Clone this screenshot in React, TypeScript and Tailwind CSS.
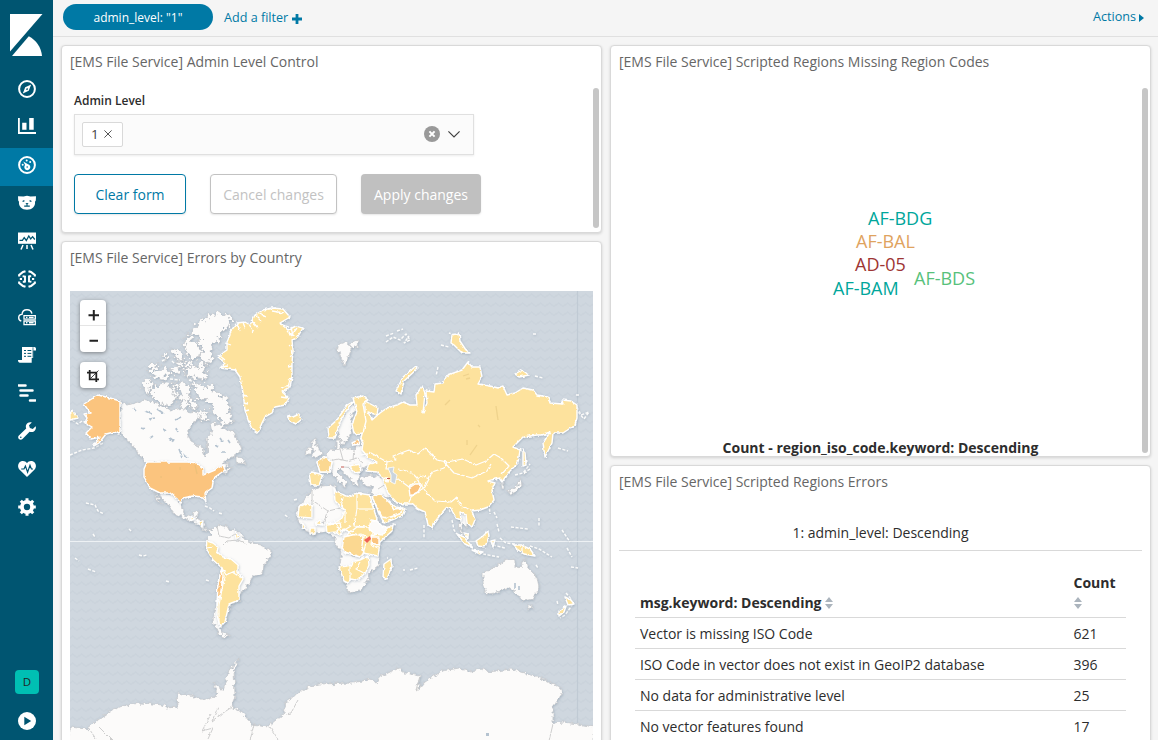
import React from "react";

const FONT = "font-['Open_Sans','Noto_Sans',sans-serif]";

function Icon({ children }: { children: React.ReactNode }) {
  return (
    <svg width="18" height="18" viewBox="0 0 18 18" fill="none" stroke="#fff" strokeWidth="1.6">
      {children}
    </svg>
  );
}

const navIcons: React.ReactNode[] = [
  <Icon>
    <circle cx="9" cy="9" r="7.9" strokeWidth="2" />
    <path d="M13.2 4.6 10.7 10.7 4.8 13.4 7.2 7.2Z M9.1 8 8 9.3 9.1 10.2 10.1 9Z" fill="#fff" fillRule="evenodd" stroke="none" />
  </Icon>,
  <Icon>
    <path d="M.9 0V15H18" strokeWidth="1.8" />
    <path d="M4.2 4.7h4.3V11.8h-4.3ZM11.2 0h4.5V11.8H11.2Z" fill="#fff" stroke="none" />
  </Icon>,
  <Icon>
    <circle cx="9" cy="9" r="7.9" strokeWidth="2" />
    <path d="M7.1 9.1 5.2 5.4 10 8.2A3 3 0 1 1 7.1 9.1Z" fill="#fff" stroke="none" />
    <circle cx="4.7" cy="8.7" r="1" fill="#fff" stroke="none" />
    <circle cx="8.7" cy="4.6" r="1" fill="#fff" stroke="none" />
    <circle cx="12.2" cy="6" r="1" fill="#fff" stroke="none" />
    <circle cx="9.2" cy="11" r=".8" fill="#0079a5" stroke="none" />
  </Icon>,
  <Icon>
    <path d="M0 2.2 5.5 2.6 9 1.8 12.5 2.6 18 2.2 17.8 6.5 17 7.8C17.6 12.4 14 15.8 9 15.8S.4 12.4 1 7.8L.2 6.5Z" fill="#fff" stroke="none" />
    <path d="M4.6 7.5 6.4 6.6M13.4 7.5 11.6 6.6M6.2 12.2h5.6" stroke="#005571" strokeWidth="1.3" />
    <path d="M7.3 8.9h3.4L9 10.6Z" fill="#005571" stroke="none" />
    <path d="M9 10V12" stroke="#005571" strokeWidth="1" />
  </Icon>,
  <Icon>
    <path d="M0 .5H18V11.8H0Z" fill="#fff" stroke="none" />
    <path d="M1.5 8.3 4.4 8.3 6.2 5.7 8.3 8.5 10.8 4 12.7 7 14.6 4.7 16.8 7.5" stroke="#005571" strokeWidth="1.3" />
    <path d="M5 13 3 17.5M9 13V17M13 13 15 17.5" strokeWidth="1.5" />
  </Icon>,
  <Icon>
    <path d="M7.5 1.2 5 2 1.2 5V6.5M1.2 11.5V13L5 16 7.5 16.8M10.5 1.2 13 2 16.8 5V6.5M16.8 11.5V13L13 16 10.5 16.8" strokeWidth="2.2" />
    <path d="M1.8 9H4M16.2 9H14M7 12.4V6.6L4.6 6.2M11 5.6V11.4L13.4 11.8M4.8 11.8H7M13.2 6.2H11" strokeWidth="1.9" />
  </Icon>,
  <Icon>
    <path d="M3.3 13C1.6 12.5.7 11.3.7 9.7.7 7.8 2.2 6.4 4 6.4 4.2 3.6 6.2 1.7 9 1.7c2.6 0 4.5 1.6 4.9 4" strokeWidth="1.4" />
    <path d="M6 7.6h11.3v3.6H6ZM6 13h11.3v3.6H6Z" strokeWidth="1.3" />
    <path d="M8 9.4h1.4M11 9.4h4.6M8 14.8h1.4M11 14.8h4.6" strokeWidth="1.5" />
  </Icon>,
  <Icon>
    <path d="M4 1H16.4Q18 1 18 2.6V4.4H15.2V12H13.7V16.8H2Q0 16.8 0 14H4Z" fill="#fff" stroke="none" />
    <path d="M6 4.5h2M9.5 4.5h3.8M6 7.4h2M9.5 7.4h3.8M6 10.3h2M9.5 10.3h3.8" stroke="#005571" strokeWidth="1" />
    <path d="M15 1.2V11.8" stroke="#005571" strokeWidth=".7" />
  </Icon>,
  <Icon>
    <path d="M.6 1.4H7.5M2.5 6.4H14.5M2.5 11.4H9.5M12 16.4H17.3" strokeWidth="2.5" strokeLinecap="round" />
  </Icon>,
  <Icon>
    <path d="M17.6 4.2 14.8 7 11.9 6.1 11 3.2 13.8.4C11.4-.4 8.8.8 8 3.2 7.7 4.4 7.8 5.5 8.2 6.5L.9 13.5C-.1 14.5-.1 16.1.9 17.1S3.5 18.1 4.5 17.1L11.6 9.8C14 10.7 16.7 9.6 17.6 7.2 18 6.2 18 5.1 17.6 4.2Z" fill="#fff" stroke="none" />
    <circle cx="2.8" cy="15.3" r=".8" fill="#005571" stroke="none" />
  </Icon>,
  <Icon>
    <path d="M9 3.2C7.2.4 3 .5 1 3-.7 5.5.1 8.1 1.9 10L9 17 16.1 10C17.9 8.1 18.7 5.5 17 3 15 .5 10.8.4 9 3.2Z" fill="#fff" stroke="none" />
    <path d="M3.2 9H6L7.4 6 9.6 12.2 12 5.3 13.4 9H15" stroke="#005571" strokeWidth="1.2" />
  </Icon>,
  <Icon>
    <circle cx="9" cy="9" r="5.1" strokeWidth="3.8" />
    <path d="M9 .2V4M9 14V17.8M.2 9H4M14 9H17.8M2.8 2.8 5.4 5.4M12.6 12.6 15.2 15.2M15.2 2.8 12.6 5.4M5.4 12.6 2.8 15.2" strokeWidth="3" />
  </Icon>,
];

function Sidebar() {
  return (
    <nav className="flex h-full w-[53px] shrink-0 flex-col bg-[#005571]">
      <div className="flex h-[72px] shrink-0 items-start pt-[14px] pl-[10px]">
        <svg width="33" height="42" viewBox="0 0 33 42" fill="#fff">
          <path d="M0 0H32.5L0 37.5Z" />
          <path d="M18.8 22.2C26 26 31.2 33 32 42H2Z" />
        </svg>
      </div>
      {navIcons.map((icon, i) => (
        <div
          key={i}
          className={
            i === 2
              ? "flex h-[38px] shrink-0 items-center bg-[#0079a5] pb-[4px] pl-[18px]"
              : "flex h-[38px] shrink-0 items-center pb-[4px] pl-[18px]"
          }
        >
          {icon}
        </div>
      ))}
      <div className="mt-auto flex flex-col pb-[10px] pl-[15px]">
        <div className="flex h-6 w-6 items-center justify-center rounded bg-[#00bfb3] text-[11.5px] text-[#222]">D</div>
        <svg className="mt-[18px] ml-[3px]" width="18" height="18" viewBox="0 0 18 18">
          <circle cx="9" cy="9" r="9" fill="#fff" />
          <path d="M6.3 4.7 13.2 9 6.3 13.3Z" fill="#005571" />
        </svg>
      </div>
    </nav>
  );
}

function Panel({ title, className, children }: { title: string; className: string; children: React.ReactNode }) {
  return (
    <section
      className={
        "relative flex flex-col overflow-hidden rounded-[4px] border border-[#d9d9d9] bg-white shadow-[0_1px_3px_rgba(0,0,0,0.15)] " +
        className
      }
    >
      <h2 className="h-[32px] shrink-0 pl-2 text-[14px] leading-[31px] text-[#666]">{title}</h2>
      {children}
    </section>
  );
}

function AdminControl() {
  return (
    <Panel title="[EMS File Service] Admin Level Control" className="h-[188px]">
      <div className="pt-[15px] pl-3">
        <div className="text-[12px] leading-[16px] font-semibold text-[#2d2d2d]">Admin Level</div>
        <div className="mt-[5px] flex h-[41px] w-[400px] items-center border border-[#e0e0e0] bg-[#fbfbfb] pb-px pl-[7px] shadow-[0_1px_2px_rgba(0,0,0,0.08)]">
          <div className="flex h-[25px] w-[41px] items-center gap-[5px] rounded-[2px] border border-[#d9d9d9] bg-white pl-2 text-[13.5px] text-[#3f3f3f]">
            <span>1</span>
            <svg width="8" height="8" viewBox="0 0 8 8" stroke="#555" fill="none"><path d="M.4.4 7.6 7.6M7.6.4.4 7.6" /></svg>
          </div>
          <svg className="ml-[301px]" width="16" height="16" viewBox="0 0 16 16">
            <circle cx="8" cy="8" r="8" fill="#999" />
            <path d="M5.4 5.4 10.6 10.6M10.6 5.4 5.4 10.6" stroke="#fff" strokeWidth="2" />
          </svg>
          <svg className="ml-2" width="12" height="8" viewBox="0 0 12 8" fill="none" stroke="#444" strokeWidth="1.2">
            <path d="M.4 1.3 6 7 11.6 1.3" />
          </svg>
        </div>
        <div className="mt-[19px] flex gap-6 text-[14px]">
          <button className="h-10 w-[112px] rounded-[4px] border border-[#0079a5] bg-white text-[#0079a5] shadow-[0_1px_2px_rgba(0,0,0,0.1)]">Clear form</button>
          <button className="h-10 w-[127px] rounded-[4px] border border-[#c2c2c2] bg-white text-[#c2c2c2] shadow-[0_1px_2px_rgba(0,0,0,0.1)]">Cancel changes</button>
          <button className="h-10 w-[120px] rounded-[4px] bg-[#c0c0c0] text-white shadow-[0_1px_2px_rgba(0,0,0,0.1)]">Apply changes</button>
        </div>
      </div>
      <div className="absolute top-[42px] right-[2px] h-[140px] w-[6px] rounded-full bg-[#c6c6c6]" />
    </Panel>
  );
}

const whiteLand = [
  "M120 401 128 405 138 402 143 400 157 404 165 407 170 411 182 408 189 413 197 412 202 417 193 423 187 433 191 442 203 448 205 457 208 452 207 440 212 433 210 423 218 424 227 431 230 427 235 436 240 444 242 450 234 456 227 459 220 465 229 463 225 469 234 467 226 473 216 471 203 476 190 464 147 464 138 453 131 443 120 434Z",
  "M237 456 244 460 245 464 237 463Z",
  "M156 491 172 494 181 502 182 509 185 515 192 517 195 511 198 512 196 518 204 521 204 528 211 530 205 530 196 524 184 518 173 513 169 506Z",
  "M155 493 163 505 157 499Z",
  "M207 530 212 530 217 525 227 527 240 533 248 542 260 545 271 550 270 557 264 565 262 573 252 577 245 590 240 592 240 600 232 603 230 610 226 615 226 622 220 627 223 633 230 636 223 637 217 632 213 620 217 603 218 583 222 568 213 560 206 548 207 540 212 535Z",
  "M192 331 197 324 203 319 217 312 232 317 228 327 220 332 219 339 212 347 213 356 209 364 203 362 200 355 204 347 196 343 203 338 197 335Z",
  "M184 345 189 333 193 341 199 347 201 355 194 361 188 355Z",
  "M171 349 178 349 183 356 180 361 174 356Z M162 356 168 352 166 359Z M185 361 191 362 190 367 184 366Z",
  "M147 369 154 362 160 365 151 373Z M152 375 163 368 170 373 164 380 156 378Z M171 369 177 365 180 371 174 375Z M185 370 193 366 206 371 208 379 195 378 186 376Z M176 360 184 361 182 367 177 365Z M196 363 206 364 204 369 197 368Z",
  "M144 380 153 381 151 388 146 395 143 388Z",
  "M151 391 158 384 168 383 172 391 176 398 171 407 163 404 157 402 152 397Z",
  "M175 383 184 382 191 388 189 399 180 403 181 393Z M180 402 188 400 189 407 182 409Z M172 384 176 389 178 399 174 395Z",
  "M193 385 199 382 204 388 211 385 217 393 225 398 232 407 228 414 235 422 225 425 218 417 212 414 213 405 207 400 198 398Z M197 411 207 413 208 421 200 419Z M190 399 197 401 196 409 191 408Z",
  "M312 490 322 486 335 485 336 492 343 495 350 497 357 492 370 495 372 502 377 518 382 527 393 525 392 532 380 542 378 555 379 565 370 572 368 580 360 590 349 594 345 583 339 567 342 553 335 543 335 537 327 532 312 535 302 528 297 518 298 507 307 497Z",
  "M325 457 331 449 336 450 338 446 343 449 354 449 359 444 364 447 368 456 377 461 376 466 369 465 361 469 360 476 357 480 359 487 352 482 346 474 340 469 337 472 347 482 345 488 336 477 331 472 330 463Z",
  "M360 478 370 475 382 477 385 483 391 490 397 499 390 498 380 495 373 498 371 490 373 486 363 485Z",
  "M312 440 316 438 316 444 322 454 316 458 312 457 315 452 312 446Z M306 450 312 447 311 454 307 454Z",
  "M336 423 342 417 350 404 357 408 350 419 353 425 348 439 343 445 339 438Z M336 440 341 440 340 449 336 448Z",
  "M337 345 346 342 352 347 349 354 345 366 340 356Z M350 343 358 340 357 346 353 349Z",
  "M483 573 493 568 502 562 508 559 515 560 515 567 521 568 524 558 528 568 537 577 539 587 533 599 523 601 515 592 508 588 495 593 487 594 483 583Z M527 605 532 605 531 610 529 611Z",
  "M70 727 87 729 98 720 112 710 125 705 141 703 163 705 167 708 178 707 177 693 191 695 204 700 217 695 214 683 223 690 229 670 239 659 234 670 235 695 232 707 243 713 251 724 269 726 284 713 286 702 298 693 308 687 318 684 353 683 370 679 376 683 380 677 398 668 405 673 420 676 418 690 425 682 442 671 458 668 470 672 480 668 489 672 511 669 525 673 542 679 561 688 562 695 553 707 553 723 563 722 577 724 594 727 594 745 69 745Z",
  "M459 514 466 515 470 521 467 528 463 524 461 530 465 538 460 532Z M501 483 504 483 504 489 502 489Z M507 492 513 489 518 486 521 477 522 486 516 492 509 494Z M524 471 527 472 523 475Z",
];

const ORANGE = "#fbc47e";

const yellowLand = [
  "M230 332 237 323 245 322 250 325 255 315 263 310 272 308 283 309 290 317 280 323 288 330 296 326 303 328 297 338 292 340 293 350 292 363 292 377 290 387 282 392 289 398 285 405 275 407 272 413 265 417 262 423 258 433 252 429 248 420 245 410 243 393 240 377 235 370 220 368 225 363 218 357 227 350 227 342 230 335Z",
  "M287 416 293 417 299 414 302 419 296 424 290 421Z",
  "M365 401 378 408 377 415 368 412 372 420 380 413 387 408 397 405 403 402 410 405 417 405 416 395 422 386 425 393 423 413 427 403 426 391 434 392 435 384 443 383 448 375 462 370 468 362 472 367 480 367 482 377 478 384 490 386 498 388 503 386 507 395 515 393 523 388 533 390 537 395 548 397 550 403 563 404 562 400 571 401 577 405 577 418 575 425 563 433 553 433 552 443 545 457 543 443 550 432 542 435 537 435 523 437 513 447 520 450 518 463 508 473 502 482 499 478 488 481 495 483 492 490 494 500 488 507 480 510 472 511 475 520 472 527 467 523 466 514 460 512 461 520 456 518 450 507 446 508 440 515 435 522 433 528 428 525 425 512 418 509 413 504 405 504 397 503 388 493 385 485 383 478 377 472 366 471 369 464 377 462 368 457 362 450 363 443 361 438 365 422 365 406Z",
  "M353 398 363 396 368 400 363 404 366 421 363 433 354 434 352 424 357 412Z M329 438 328 428 337 420 347 405 354 401 346 411 339 424 335 438Z",
  "M396 391 403 377 416 366 418 368 404 381 401 394Z M452 335 459 333 460 341 466 350 470 353 462 353 454 345 451 343Z M515 374 522 370 529 375 519 377Z",
  "M309 473 312 472 320 474 323 475 319 485 311 485Z M317 462 325 457 332 462 330 472 320 472Z M350 466 359 464 361 472 354 473Z",
  "M334 487 336 492 344 495 350 497 357 493 370 495 373 507 377 519 375 527 368 527 350 532 344 529 340 535 335 530 335 523 342 518 345 510 335 501Z",
  "M298 517 299 507 307 503 312 507 312 518Z M302 528 307 530 302 522Z M310 528 315 528 315 534 310 534Z M326 524 340 523 341 527 336 532 327 533Z M315 524 320 520 323 525Z",
  "M371 536 382 532 393 525 392 531 380 542 378 556 363 553 346 553 342 547 348 534 357 527 373 527 378 534Z",
  "M339 567 353 565 352 562 360 560 368 556 369 565 366 572 358 580 350 579 348 583 344 581Z",
  "M384 564 391 559 392 567 387 579 383 577Z",
  "M372 497 381 494 390 503 396 507 405 509 402 516 384 523 380 515Z",
  "M144 469 147 462 190 462 197 463 203 468 203 475 215 470 223 465 225 470 215 477 213 482 212 488 205 493 206 503 203 497 193 496 183 498 181 503 175 497 170 493 160 493 150 488 147 482 144 477Z",
  "M207 541 213 543 218 547 217 552 223 557 231 559 238 565 238 572 243 579 239 586 239 600 229 604 225 622 220 627 217 615 218 583 222 568 213 560 206 548Z",
  "M235 530 239 537 236 539Z M192 516 194 519 190 521Z M197 521 203 521 202 527Z",
  "M457 534 464 537 473 548 465 544Z M472 550 483 552 480 554Z M476 541 483 536 488 531 489 536 485 547 478 546Z M491 541 495 540 493 547Z M513 545 521 545 530 549 535 556 524 554 517 549Z M464 533 468 534 468 539Z",
  "M565 597 571 600 574 604 568 605Z M559 611 566 606 564 612 559 616Z",
  "M523 449 525 452 526 465 523 466Z M70 413 73 410 78 418 70 420Z M385 478 388 478 387 482Z",
];

const borders = [
  "M361 455 371 453 387 462 386 469 391 469 M387 462 396 460 393 456 409 450 418 454 425 448 437 460 447 462 463 459 476 465 486 461 494 454 501 458 509 466 502 474",
  "M444 462 454 473 472 478 487 471 491 464 M386 481 398 479 409 487 417 480 421 475 429 479 425 487 412 496 408 504 M398 469 411 472 417 478 420 485 M421 485 427 493 435 501 451 502 456 498 463 507 471 510 M447 462 444 468 432 472 429 479",
  "M343 497 341 508 345 510 345 523 M357 493 357 509 373 509 M357 509 354 526 364 527 M334 520 341 532 351 526 M348 536 362 534 367 537 365 547 362 557 355 556 M372 534 370 544 378 548 M350 566 350 581 M360 562 356 569 366 574",
  "M206 548 214 547 M222 568 226 575 235 571 M226 575 223 584 219 605 219 625 M232 572 243 579 M522 547V554",
];

const greyBorders = [
  "M312 490 312 500 328 511 341 508 M328 511 323 524 M312 500 312 518 M343 537 352 556 362 557 M329 461 338 459 347 461 357 458 363 463 M340 449 343 460 M354 450 353 460 M344 467 356 468 M386 484 378 489 M217 526 219 536 229 538 235 534 M222 546 227 541 238 540 247 544",
  "M99 727 112 740 M90 730 96 739 M218 707 212 721 223 713 232 707 M211 714 202 731 213 728 208 739 M254 724 250 741 M270 727 280 742 M298 700 291 713 285 714 M553 724 549 741 M420 676 416 690 422 686",
];

const smallIslands =
  "M205 506l5 2 4 3M219 513l4 1M129 529l3 3M139 555l4 1 4-1M86 503l9 2 3 6 6 3M93 534l2 3M75 558l4 3M88 569l8 3M166 581l4 1M206 580l3 1M418 498l1 8M424 525v13M452 520l2 10 5 7M489 504l1 10M494 512l3 6M497 524l2 8M493 545l12 3M500 538l6 5 9 1M483 554l16 3M530 546l9 3 13 8M511 527l17 2M539 518v8M562 530l8 12M567 548l5 9M571 567l7 1M566 593l5 6M573 604l-8 11-5 3M386 342l7-5 7 3 6-6 4 6-6 3 5-7M397 331l6-2M425 391l4-3M438 367l-2 9M455 335l-6-2M576 395h4M577 407l4 8 8-3-5 7-6-7M558 448l10 3M530 469l-6 4M515 475l8-2 7-9M72 420l6 4 4-3M70 455l12-5 12-2 9-5M285 515l4 3M294 500l4-1M393 524l4 1M400 548v2M403 570h2M410 570l8-2M387 558h1M536 565l2 3M557 601l1 4M450 512l-1-4M441 345l8 2M386 336l8-3M533 334h4M535 376l8 2M162 361l4-2M172 361l3 3M190 364l3 1M166 383l4 1M189 380l5 2M170 379l10 1";

const fjords =
  "M237 323l3 8M243 322l2 6M249 325l4 7M251 320l7 8M255 315l6 6M259 313l7 4M268 309l8-1M272 311l12 2M280 324l9 3M287 331l5 5M291 327l2 9M297 328l-6 8M225 343l6 2M220 356l5 4M222 367l6-1M292 345l-3 2M293 355l-4 2M292 366l-4 1M293 377l-5 3M289 385l-8 3M283 391l5 7M281 397l6 1M243 395l4 1M244 403l4 1M245 411l4-1M248 421l4 1M291 350l2 6M290 380l-2 7";

function WorldMap() {
  return (
    <svg className="block" width="523" height="449" viewBox="70 291 523 449">
      <defs>
        <pattern id="waves" x="70" y="291" width="9" height="9" patternUnits="userSpaceOnUse">
          <path d="M-1 6 2.5 3 7 6.5 10 3.5" fill="none" stroke="#c7d0d8" strokeWidth="1.5" opacity=".55" />
        </pattern>
        <filter id="coast" x="-5%" y="-5%" width="110%" height="110%">
          <feTurbulence type="fractalNoise" baseFrequency="0.25" numOctaves="2" seed="4" />
          <feDisplacementMap in="SourceGraphic" scale="6" xChannelSelector="R" yChannelSelector="G" />
        </filter>
        <filter id="arctic" x="-5%" y="-5%" width="110%" height="110%">
          <feTurbulence type="fractalNoise" baseFrequency="0.28" numOctaves="2" seed="7" />
          <feDisplacementMap in="SourceGraphic" scale="13" xChannelSelector="R" yChannelSelector="G" />
        </filter>
        <filter id="fine" x="-5%" y="-5%" width="110%" height="110%">
          <feTurbulence type="fractalNoise" baseFrequency="0.25" numOctaves="2" seed="9" />
          <feDisplacementMap in="SourceGraphic" scale="3" xChannelSelector="R" yChannelSelector="G" />
        </filter>
        <filter id="shade" x="-5%" y="-5%" width="110%" height="110%">
          <feDropShadow dx=".5" dy="1" stdDeviation="1" floodColor="#8496a6" floodOpacity=".5" />
        </filter>
      </defs>
      <rect x="70" y="291" width="523" height="449" fill="#cfd7df" />
      <rect x="70" y="291" width="523" height="449" fill="url(#waves)" />
      <path d="M577.5 291V725" stroke="#c0cad4" strokeWidth="1.2" />
      <path d="M70 541.5H593" stroke="#edf1f4" strokeWidth="1.2" />
      <g filter="url(#shade)">
        <g filter="url(#coast)" fill="#fcfbfa" stroke="#c9cccf" strokeWidth=".9" strokeLinejoin="round">
          {whiteLand.filter((_, i) => i < 5 || i > 12).map((d) => (
            <path key={d} d={d} />
          ))}
        </g>
        <g filter="url(#arctic)" fill="#fcfbfa" stroke="#c9cccf" strokeWidth=".9" strokeLinejoin="round">
          {whiteLand.slice(5, 13).map((d) => (
            <path key={d} d={d} />
          ))}
        </g>
        <path d={smallIslands} fill="none" stroke="#fcfcfb" strokeWidth="1.4" strokeDasharray="3 1.6" />
        <g filter="url(#fine)" fill="none" stroke="#c8c8c8" strokeWidth=".9">
          {greyBorders.map((d) => (
            <path key={d} d={d} />
          ))}
        </g>
      </g>
      <path
        d="M145 411l7 3M149 419l6-1M157 409l6 4M133 408l3 3M175 420l6-3M176 428l2 4M170 438l4 3M179 449l3 8M184 454l3 4M163 429l3 2M199 469l4 3M215 445l3 2M222 452h3M228 440l2 3M220 438l2 3M142 428l3 1M150 438l3-2M515 583v6M519 586v4"
        fill="none"
        stroke="#b5c3d0"
        strokeWidth="1.6"
        filter="url(#fine)"
      />
      <g filter="url(#shade)">
        <g filter="url(#fine)" stroke="#fff" strokeWidth="1.4" strokeLinejoin="round">
          {yellowLand.map((d, i) => (
            <path key={d} d={d} fill={i === 12 ? ORANGE : "#fde29d"} />
          ))}
          <path fill={ORANGE} d="M84 404 90 400 98 395 110 398 120 401V434L114 432 106 434 99 443 94 446 100 437 91 439 86 433 92 427 85 423 87 418 84 414 90 413Z" />
          <path fill="#fbd891" d="M372 497 380 494 390 503 394 509 403 508 400 514 387 518 382 517Z M344 537 355 534 363 536 362 546 364 553 360 557 345 552 342 549Z M317 462 325 457 332 462 330 472 320 472Z" />
          <path fill={ORANGE} d="M409 488 415 484 422 484 418 492 410 496Z M371 537 379 537 379 545 371 543Z M352 443 358 440 360 444 353 445Z M218 583 222 568 223 576 221 591 217 606Z" />
          <path fill="#fcfbfa" d="M371 520 377 521 382 526 388 528 382 535 375 534 369 529Z" />
          <g fill="none" strokeWidth="1.2">
            {borders.map((d) => (
              <path key={d} d={d} />
            ))}
            <path d={fjords} strokeWidth="1.3" />
          </g>
        </g>
      </g>
      <path d="M388 468 394 467 393 472 397 475 395 484 391 482 391 475Z" fill="#cbd5de" stroke="#fff" strokeWidth=".8" />
      <path d="M463 376l6-2M466 379l4-1M445 405l5-5M496 406l2 14M478 425l2 2M470 455l7-10M467 440v5M355 441l2-1M195 465l2 9M180 467v3M161 476v2" fill="none" stroke="#d9bc73" strokeWidth="1.3" opacity=".4" />
      <path d="M364 540 370 536 371 539 367 543Z" fill="#ef6155" />
      <path d="M341 467h3M387 478.5h3" stroke="#c2574f" strokeWidth="1" />
      <path d="M486 733h3v3h-3Z" fill="#b5c3d0" />
    </svg>
  );
}

function MapPanel() {
  return (
    <Panel title="[EMS File Service] Errors by Country" className="h-[520px]">
      <div className="relative mt-[17px] ml-[8px] h-[460px] w-[523px]">
        <WorldMap />
        <div className="absolute top-[9px] left-[10px] flex w-[26px] flex-col gap-[10px]">
          <div className="h-[52px] rounded-[4px] bg-white shadow-[0_1px_4px_rgba(0,0,0,0.4)]">
            <svg width="26" height="52" viewBox="0 0 26 52">
              <path d="M0 25.5H26" stroke="#e5e5e5" />
              <path d="M8.5 15.2H19M13.8 10V20.4M9.5 40.8H18" stroke="#222" strokeWidth="2" />
            </svg>
          </div>
          <div className="flex h-[26px] items-center justify-center rounded-[4px] bg-white pt-[2px] shadow-[0_1px_4px_rgba(0,0,0,0.4)]">
            <svg width="12" height="12" viewBox="0 0 12 12" fill="none" stroke="#222" strokeWidth="1.8">
              <path d="M2.7 0V9.3H12M0 2.7H9.3V12" />
              <path d="M3.5 8.5 11.5.5" strokeWidth=".8" />
            </svg>
          </div>
        </div>
      </div>
    </Panel>
  );
}

const tags = [
  { t: "AF-BDG", c: "absolute left-[257px] top-[160px] text-[#00a69b]" },
  { t: "AF-BAL", c: "absolute left-[245px] top-[183px] text-[#dfa35f]" },
  { t: "AD-05", c: "absolute left-[244px] top-[206px] text-[#9e3533]" },
  { t: "AF-BDS", c: "absolute left-[303px] top-[220px] text-[#57c17b]" },
  { t: "AF-BAM", c: "absolute left-[222px] top-[230px] text-[#00a69b]" },
];

function TagCloud() {
  return (
    <Panel title="[EMS File Service] Scripted Regions Missing Region Codes" className="h-[412px]">
      {tags.map((x) => (
        <span key={x.t} className={x.c + " text-[18px] leading-[24px] whitespace-nowrap"}>
          {x.t}
        </span>
      ))}
      <div className="mt-auto h-[18px] w-[539px] shrink-0 text-center text-[14px] leading-[20px] font-bold text-[#2d2d2d]">
        Count - region_iso_code.keyword: Descending
      </div>
      <div className="absolute top-[42px] right-[2px] h-[365px] w-[6px] rounded-full bg-[#c6c6c6]" />
    </Panel>
  );
}

function Sort() {
  return (
    <svg className="inline-block" width="8" height="12" viewBox="0 0 8 12" fill="#abb4bd">
      <path d="M4 0 8 5H0ZM4 12 8 7H0Z" />
    </svg>
  );
}

const rows = [
  ["Vector is missing ISO Code", "621"],
  ["ISO Code in vector does not exist in GeoIP2 database", "396"],
  ["No data for administrative level", "25"],
  ["No vector features found", "17"],
];

function ErrorTable() {
  return (
    <Panel title="[EMS File Service] Scripted Regions Errors" className="h-[300px]">
      <div className="mx-[8px] mt-[17px] h-[36px] w-[523px] shrink-0 border-b border-[#d9d9d9] text-center text-[14px] leading-[36px] text-[#2d2d2d]">
        1: admin_level: Descending
      </div>
      <div className="mt-[20px] ml-[24px] w-[491px] text-[14px] text-[#2d2d2d]">
        <div className="flex h-[47px] items-end border-b border-[#d9d9d9] pl-[5px] font-bold">
          <div className="flex h-[29px] w-[433.5px] items-center gap-[3px]">
            msg.keyword: Descending <Sort />
          </div>
          <div className="flex h-[45px] flex-col pt-px leading-[20px]">
            <span>Count</span>
            <span className="flex h-[20px] items-center"><Sort /></span>
          </div>
        </div>
        {rows.map((r) => (
          <div key={r[0]} className="flex h-[31px] items-center border-b border-[#d9d9d9] pl-[5px]">
            <div className="w-[433.5px]">{r[0]}</div>
            <div>{r[1]}</div>
          </div>
        ))}
      </div>
    </Panel>
  );
}

export default function App() {
  return (
    <div className={"flex h-[740px] w-[1158px] overflow-hidden bg-[#f5f5f5] " + FONT}>
      <Sidebar />
      <div className="flex min-w-0 flex-1 flex-col">
        <header className="flex h-[37px] shrink-0 border-b border-[#e0e0e0] pt-1 pl-[10px]">
          <div className="flex h-[26px] w-[150px] items-center justify-center rounded-full bg-[#0079a5] pt-px text-[12px] text-white">
            admin_level: "1"
          </div>
          <div className="ml-[11px] flex h-[29px] items-center gap-1 text-[12.6px] text-[#0079a5]">
            Add a filter
            <svg width="10" height="10" viewBox="0 0 10 10" stroke="#0079a5" strokeWidth="2.8"><path d="M0 5H10M5 0V10" /></svg>
          </div>
          <div className="mr-[14px] ml-auto flex h-[27px] items-center gap-[3px] text-[12.6px] text-[#0079a5]">
            Actions
            <svg width="5" height="8" viewBox="0 0 5 8" fill="#0079a5"><path d="M0 0 5 4 0 8Z" /></svg>
          </div>
        </header>
        <main className="grid min-h-0 flex-1 grid-cols-[541px_541px] items-start gap-x-[8px] overflow-hidden pt-[8px] pl-[8px]">
          <div className="flex flex-col gap-2">
            <AdminControl />
            <MapPanel />
          </div>
          <div className="flex flex-col gap-2">
            <TagCloud />
            <ErrorTable />
          </div>
        </main>
      </div>
    </div>
  );
}
